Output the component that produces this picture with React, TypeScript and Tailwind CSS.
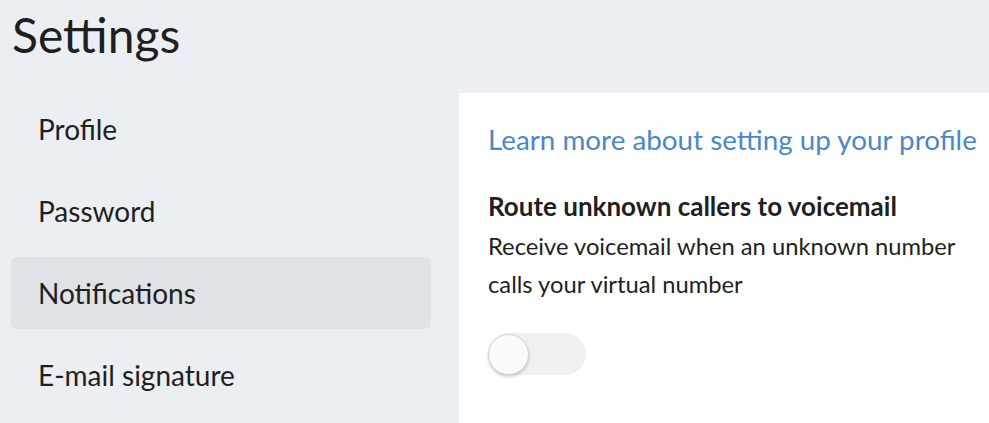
const items = ['Profile', 'Password', 'Notifications', 'E-mail signature'];

export default function App() {
  return (
    <div className="h-[423px] w-[989px] overflow-hidden bg-[#ebeef3] font-['Lato',sans-serif] text-[#1f1f1f]">
      <h1 className="h-[93px] pl-[12px] pt-[5px] text-[48px] leading-[60px]">Settings</h1>
      <div className="flex">
        <nav className="flex w-[459px] flex-col gap-[10px] pl-[11px] pr-[28px]">
          {items.map((item) => (
            <div
              key={item}
              className={
                'flex h-[72px] items-center rounded-[6px] pl-[27px] text-[28px] ' +
                (item === 'Notifications' ? 'bg-[#dfe2e7]' : '')
              }
            >
              {item}
            </div>
          ))}
        </nav>
        <main className="h-[330px] flex-1 bg-white pl-[29px] pt-[27px]">
          <a className="block text-[27.8px] leading-[40px] text-[#4a88c9]">
            Learn more about setting up your profile
          </a>
          <h2 className="mt-[30px] text-[26px] font-bold leading-[32px]">Route unknown callers to voicemail</h2>
          <p className="mt-[5px] w-[480px] text-[23.75px] leading-[38px]">
            Receive voicemail when an unknown number
            <br />
            calls your virtual number
          </p>
          <div className="mt-[30px] flex h-[42px] w-[98px] items-center rounded-full bg-[#f0f0f0]">
            <div className="h-[41px] w-[41px] rounded-full border border-[#d4d4d4] bg-[#fafafa] shadow-[0_2px_3px_rgba(0,0,0,0.18)]" />
          </div>
        </main>
      </div>
    </div>
  );
}
